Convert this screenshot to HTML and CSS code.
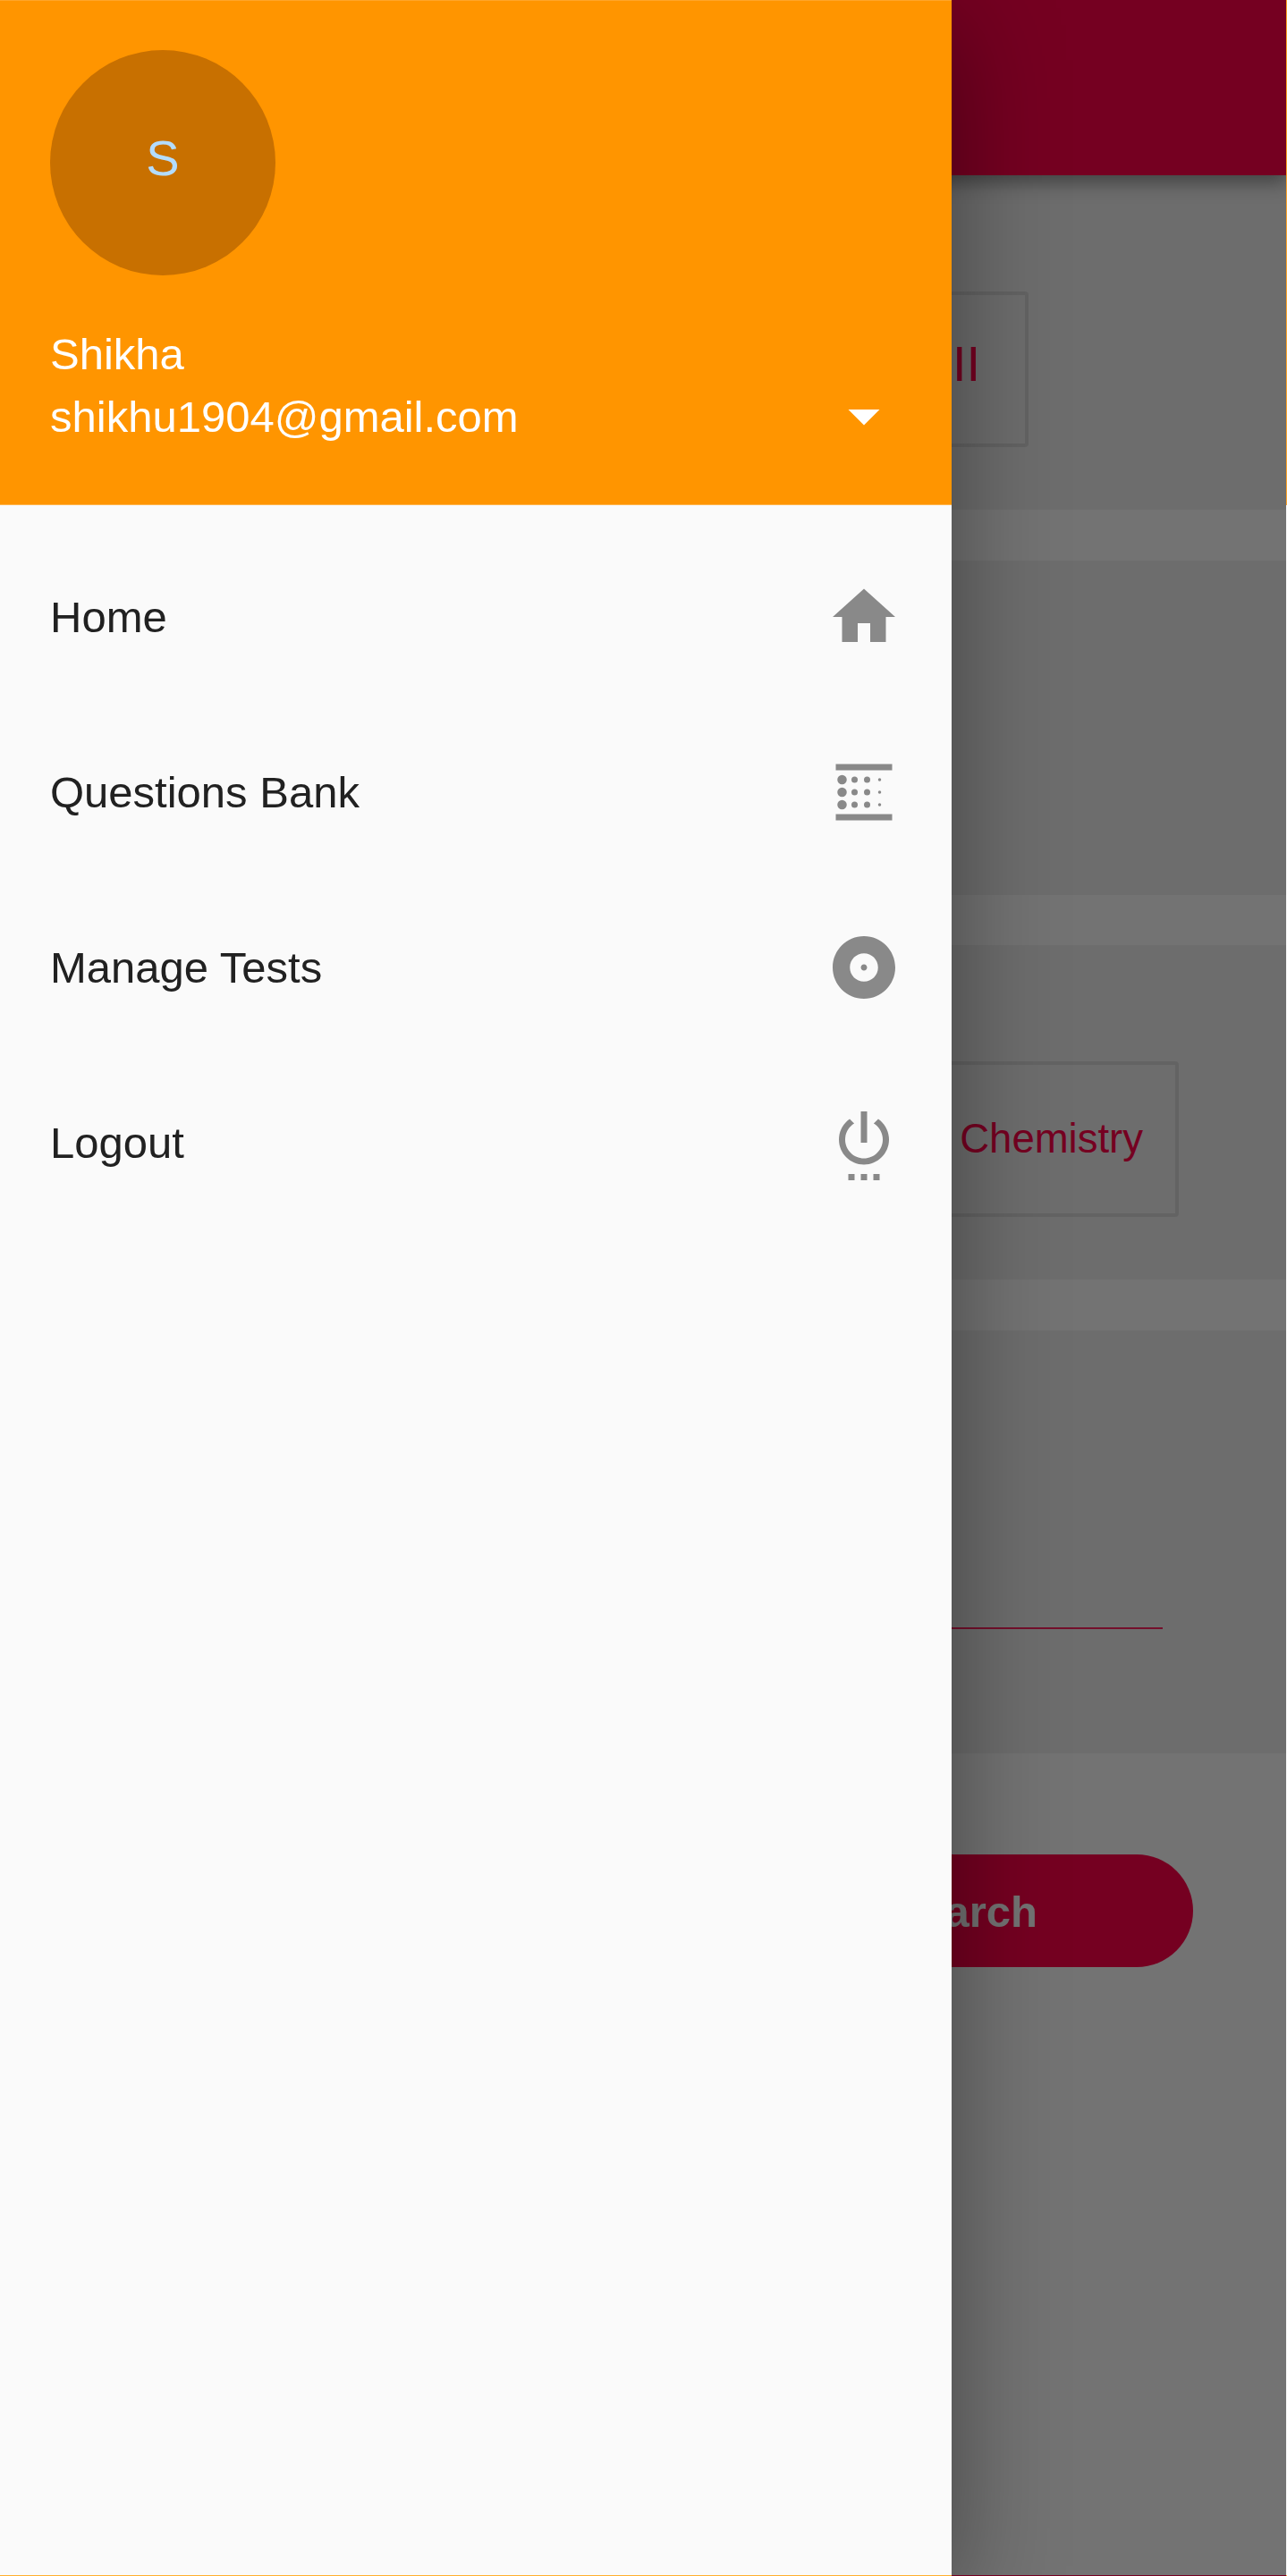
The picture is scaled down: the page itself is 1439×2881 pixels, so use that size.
FILE: index.html
```html
<!DOCTYPE html>
<html lang="en">
<head>
<meta charset="utf-8">
<title>Search</title>
<link rel="stylesheet" href="styles.css">
</head>
<body>
<div class="screen">
  <main class="page">
    <header class="appbar"></header>
    <section class="card card-first"><div class="option option-class">II</div></section>
    <section class="card card-empty"></section>
    <section class="card card-subject"><div class="option option-subject">Chemistry</div></section>
    <section class="card card-input"><div class="field"></div></section>
    <button class="search">Search</button>
  </main>
  <div class="scrim"></div>
  <aside class="drawer">
    <header class="account">
      <div class="avatar">S</div>
      <div class="identity">
        <div class="names"><div>Shikha</div><div>shikhu1904@gmail.com</div></div>
        <svg class="icon" viewBox="0 0 24 24"><path d="M7 10l5 5 5-5z"/></svg>
      </div>
    </header>
    <nav class="menu">
      <a class="item"><span>Home</span><svg class="icon" viewBox="0 0 24 24"><path d="M10 20v-6h4v6h5v-8h3L12 3 2 12h3v8z"/></svg></a>
      <a class="item"><span>Questions Bank</span><svg class="icon" viewBox="0 0 24 24"><path d="M3 3h18v2H3zM3 19h18v2H3z"/><circle cx="5" cy="8" r="1.5"/><circle cx="5" cy="12" r="1.5"/><circle cx="5" cy="16" r="1.5"/><circle cx="9" cy="8" r="1"/><circle cx="9" cy="12" r="1"/><circle cx="9" cy="16" r="1"/><circle cx="13" cy="8" r="1"/><circle cx="13" cy="12" r="1"/><circle cx="13" cy="16" r="1"/><circle cx="17" cy="8" r=".5"/><circle cx="17" cy="12" r=".5"/><circle cx="17" cy="16" r=".5"/></svg></a>
      <a class="item"><span>Manage Tests</span><svg class="icon" viewBox="0 0 24 24"><path d="M12 2C6.48 2 2 6.48 2 12s4.480 10 10 10 10-4.480 10-10S17.520 2 12 2zm0 14.500c-2.490 0-4.500-2.010-4.500-4.500S9.510 7.500 12 7.500s4.500 2.010 4.500 4.500-2.010 4.500-4.500 4.500zm0-5.500c-.55 0-1 .45-1 1s.45 1 1 1 1-.45 1-1-.45-1-1-1z"/></svg></a>
      <a class="item"><span>Logout</span><svg class="icon" viewBox="0 0 24 24"><path d="M7 24h2v-2H7v2zm4 0h2v-2h-2v2zm2-22h-2v10h2V2zm3.560 2.440l-1.450 1.450C16.840 6.940 18 8.830 18 11c0 3.310-2.690 6-6 6s-6-2.690-6-6c0-2.170 1.160-4.060 2.880-5.120L7.440 4.440C5.360 5.880 4 8.280 4 11c0 4.420 3.580 8 8 8s8-3.580 8-8c0-2.720-1.360-5.120-3.440-6.560zM15 24h2v-2h-2v2z"/></svg></a>
    </nav>
  </aside>
  <div class="edge edge-right"></div>
  <div class="edge edge-bottom"></div>
</div>
</body>
</html>
```
FILE: styles.css
```css
* { box-sizing: border-box; }
body { margin: 0; font-family: "Liberation Sans", Arial, sans-serif; }
.screen { position: relative; width: 1439px; height: 2881px; overflow: hidden; }
.page { display: flex; flex-direction: column; height: 100%; background: #fafafa; }
.appbar { flex: none; height: 196px; background: #ff0048; position: relative; box-shadow: 0 8px 20px rgba(0,0,0,.4); }
.card { flex: none; background: #ededed; margin-bottom: 56px; display: flex; justify-content: flex-end; align-items: flex-start; }
.card-first { height: 374px; padding: 130px 289px 0 0; }
.card-empty { height: 374px; margin-top: 1px; }
.card-subject { height: 374px; padding: 130px 121px 0 0; }
.card-input { height: 473px; padding: 332px 139px 0 0; margin: 1px 0 113px; }
.option { height: 174px; border: 4px solid #d8d8d8; border-radius: 4px; color: #ff0048; display: flex; align-items: center; justify-content: flex-end; }
.option-class { width: 300px; padding-right: 50px; font-size: 56px; padding-bottom: 13px; }
.option-subject { width: 420px; padding-right: 36px; font-size: 45.500px; }
.field { width: 1160px; height: 2px; background: #ff0048; opacity: .85; }
.search { flex: none; align-self: flex-end; width: 1229px; height: 126px; margin-right: 105px; padding: 1px 174px 0 0; border: 0; border-radius: 63px; background: #ff0048; color: #fafafa; font: bold 49px "Liberation Sans", Arial, sans-serif; text-align: right; }
.scrim { position: absolute; inset: 0; background: rgba(0,0,0,.54); }
.drawer { position: absolute; top: 0; left: 0; width: 1064px; height: 2881px; background: #fafafa; box-shadow: 0 28px 112px rgba(0,0,0,.4); }
.account { height: 565px; background: #ff9500; padding: 55px 56px 56px; color: #fff; border-top: 1px solid #ffa52a; border-bottom: 1px solid #ffb54d; }
.avatar { width: 252px; height: 252px; border-radius: 50%; background: #c87000; color: #b3dcff; font-size: 56px; line-height: 242px; text-align: center; }
.identity { display: flex; justify-content: space-between; align-items: flex-end; margin-top: 53px; }
.names { font-size: 49px; line-height: 70px; }
.icon { display: block; width: 84px; height: 84px; fill: currentColor; }
.identity .icon { margin-bottom: -6px; }
.menu { padding-top: 27px; }
.item { display: flex; align-items: center; justify-content: space-between; height: 196px; padding: 0 56px; font-size: 49px; color: #212121; }
.item .icon { fill: #898989; }
.edge { position: absolute; right: 0; bottom: 0; }
.edge-right { top: 0; width: 1px; background: linear-gradient(#ffa52a 565px, #fafafa 565px); }
.edge-bottom { left: 0; height: 1px; background: linear-gradient(90deg, #ffb030 1064px, #750021 1064px, #750021 1438px, #ffb030 1438px); }
```
